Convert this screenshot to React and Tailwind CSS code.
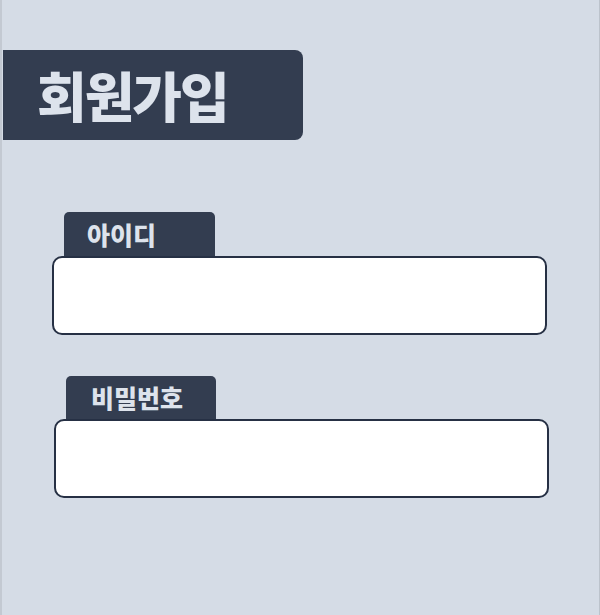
export default function App() {
  const font = { fontFamily: '"Noto Sans CJK KR", "Noto Sans", sans-serif' };
  return (
    <div
      className="w-[600px] h-[615px] bg-[#d5dce6] border-l-2 border-r border-l-[#c3c9d2] border-r-[#bcc3cc] flex flex-col"
      style={font}
    >
      <div className="mt-[50px] ml-px w-[300px] h-[90px] bg-[#333d50] rounded-r-[8px] flex items-center pl-[34px]">
        <h1 className="text-[54px] font-black text-[#dde3ec] leading-none tracking-[-2px]">회원가입</h1>
      </div>

      <div className="mt-[72px] ml-[50px] w-[495px] flex flex-col">
        <div className="ml-[12px] w-[151px] h-[44px] bg-[#333d50] rounded-t-[5px] flex items-center pl-[23px]">
          <span className="text-[25px] font-black text-[#dde3ec] leading-none">아이디</span>
        </div>
        <div className="h-[79px] bg-white border-2 border-[#263044] rounded-[10px]"></div>
      </div>

      <div className="mt-[41px] ml-[52px] w-[495px] flex flex-col">
        <div className="ml-[12px] w-[150px] h-[43px] bg-[#333d50] rounded-t-[5px] flex items-center pl-[25px]">
          <span className="text-[25px] font-black text-[#dde3ec] leading-none">비밀번호</span>
        </div>
        <div className="h-[79px] bg-white border-2 border-[#263044] rounded-[10px]"></div>
      </div>
    </div>
  );
}
